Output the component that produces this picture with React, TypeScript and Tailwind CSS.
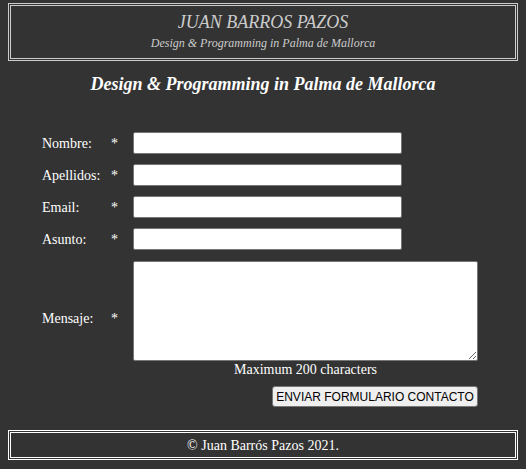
const rows = [
	{ label: "Nombre:", name: "nombre" },
	{ label: "Apellidos:", name: "apellidos" },
	{ label: "Email:", name: "email" },
	{ label: "Asunto:", name: "asunto" },
];

export default function App() {
	return (
		<div
			className="min-h-screen w-full bg-[#333333] pt-[3px] text-white"
			style={{ fontFamily: '"Liberation Serif", "Times New Roman", serif' }}
		>
			<header className="mx-2 flex h-[58px] flex-col items-center border-[3px] border-double border-[#cccccc] pt-[6px] text-[#cccccc] italic">
				<h1 className="text-[18px] leading-[21px]">JUAN BARROS PAZOS</h1>
				<p className="mt-[2px] text-[12px] leading-[16px]">
					Design &amp; Programming in Palma de Mallorca
				</p>
			</header>

			<h2 className="mt-[12px] text-center text-[18px] leading-[22px] font-bold italic">
				Design &amp; Programming in Palma de Mallorca
			</h2>

			<form className="mt-[37px] flex flex-col gap-[10px] pl-[42px] text-[14px]">
				{rows.map((r) => (
					<div key={r.name} className="flex h-[22px] items-center">
						<label className="w-[69px]">{r.label}</label>
						<span className="w-[22px]">*</span>
						<input
							type="text"
							name={r.name}
							className="h-[22px] w-[269px] rounded-[2px] border border-[#767676] bg-white px-1 text-black outline-none"
						/>
					</div>
				))}
				<div className="mt-[1px] flex">
					<label className="w-[69px] pt-[47px]">Mensaje:</label>
					<span className="w-[22px] pt-[47px]">*</span>
					<div className="flex flex-col items-center">
						<textarea
							name="mensaje"
							className="h-[100px] w-[345px] rounded-[2px] border border-[#767676] bg-white text-black outline-none"
						/>
						<p className="mt-[1px] leading-[16px]">Maximum 200 characters</p>
					</div>
				</div>
				<div className="mt-[-2px] flex w-[436px] justify-end">
					<button
						type="button"
						className="h-[21px] w-[206px] rounded-[3px] border border-[#767676] bg-[#efefef] text-[12px] text-black"
						style={{ fontFamily: '"Liberation Sans", Arial, sans-serif' }}
					>
						ENVIAR FORMULARIO CONTACTO
					</button>
				</div>
			</form>

			<footer className="mx-2 mt-[23px] flex h-[30px] items-center justify-center border-[3px] border-double border-white text-[14px]">
				© Juan Barrós Pazos 2021.
			</footer>
		</div>
	);
}
